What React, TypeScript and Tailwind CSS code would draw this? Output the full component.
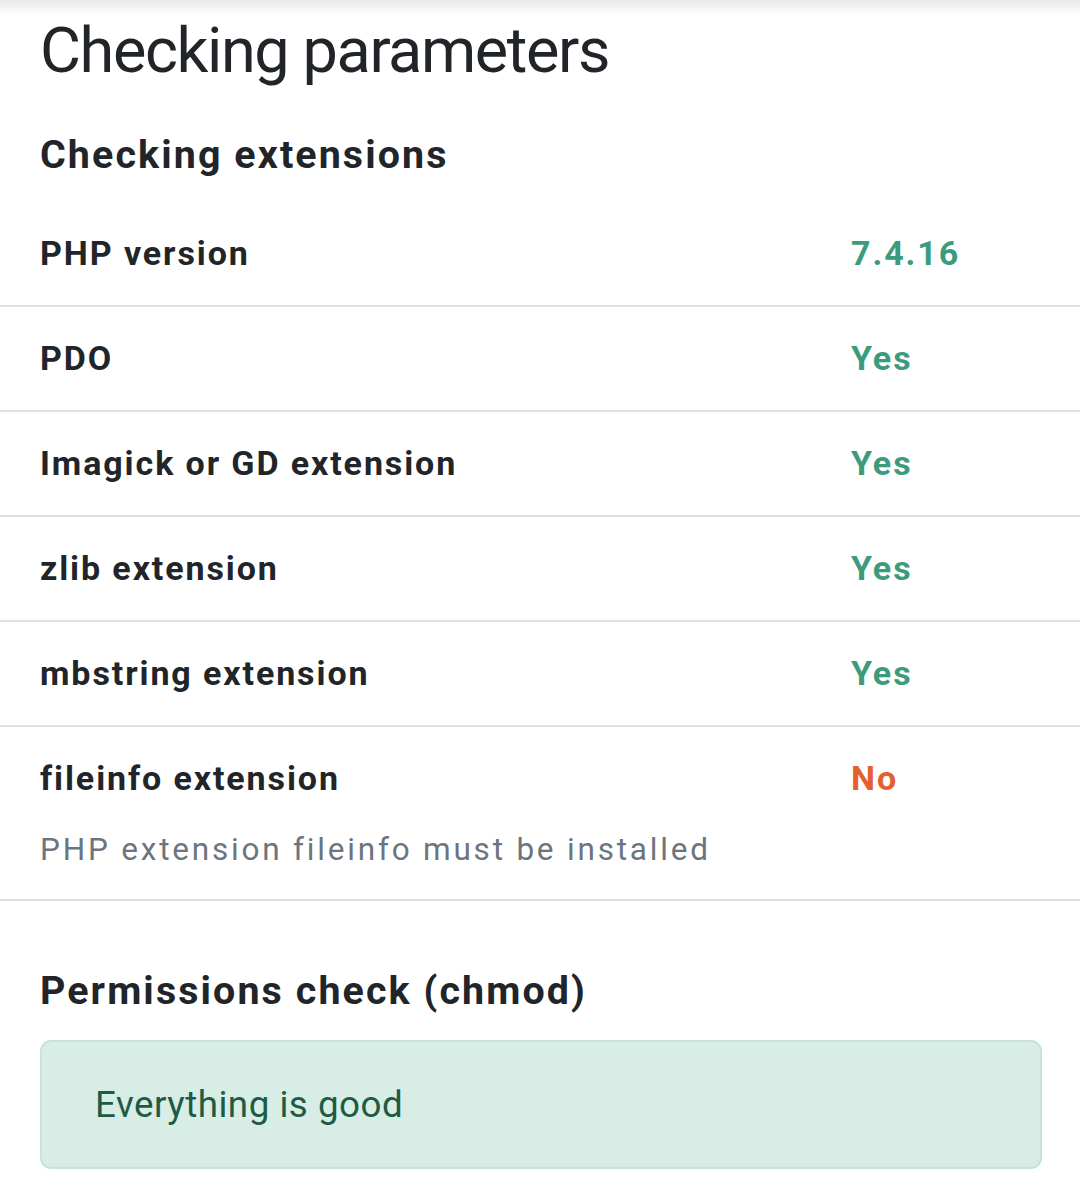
import React from 'react';

interface CheckRow {
  label: string;
  value: string;
  ok: boolean;
  hint?: string;
}

const extensionChecks: CheckRow[] = [
  { label: 'PHP version', value: '7.4.16', ok: true },
  { label: 'PDO', value: 'Yes', ok: true },
  { label: 'Imagick or GD extension', value: 'Yes', ok: true },
  { label: 'zlib extension', value: 'Yes', ok: true },
  { label: 'mbstring extension', value: 'Yes', ok: true },
  {
    label: 'fileinfo extension',
    value: 'No',
    ok: false,
    hint: 'PHP extension fileinfo must be installed',
  },
];

export default function App() {
  return (
    <div className="min-h-[1185px] bg-white text-[#212529] font-['Roboto','Liberation_Sans',sans-serif]">
      <div className="h-[16px] bg-gradient-to-b from-[#e9e9e9] to-white" />

      <h1 className="-mt-[3px] px-[40px] text-[63px] font-normal leading-[1.2] tracking-[-1.4px]">Checking parameters</h1>

      <h2 className="mt-[42px] px-[40px] text-[39.4px] font-bold leading-[1.2] tracking-[2.1px]">Checking extensions</h2>

      <div className="mt-[24px]">
        {extensionChecks.map((row, index) => (
          <div key={index} className="border-b-2 border-[#dee2e6] py-[26px] text-[34px] leading-[1.5] tracking-[1.9px]">
            <div className="grid grid-cols-[811px_1fr] pl-[40px]">
              <span className="font-bold">{row.label}</span>
              <span className={`font-bold ${row.ok ? 'text-[#3d9b7d]' : 'text-[#e4602c]'}`}>{row.value}</span>
            </div>
            {row.hint && (
              <p className="mt-[22px] pl-[40px] text-[31.5px] leading-[1.5] tracking-[2.8px] text-[#6c757d]">{row.hint}</p>
            )}
          </div>
        ))}
      </div>

      <h2 className="mt-[66px] px-[40px] text-[39.4px] font-bold leading-[1.2] tracking-[2.1px]">Permissions check (chmod)</h2>

      <div className="mt-[26px] px-[40px] pr-[38px]">
        <div className="rounded-[11px] border-[2.5px] border-[#c7e3d9] bg-[#d7ede5] px-[53px] pt-[35px] pb-[34px] text-[36.75px] leading-[1.5] tracking-[0.5px] text-[#1e5b45]">
          Everything is good
        </div>
      </div>
    </div>
  );
}
